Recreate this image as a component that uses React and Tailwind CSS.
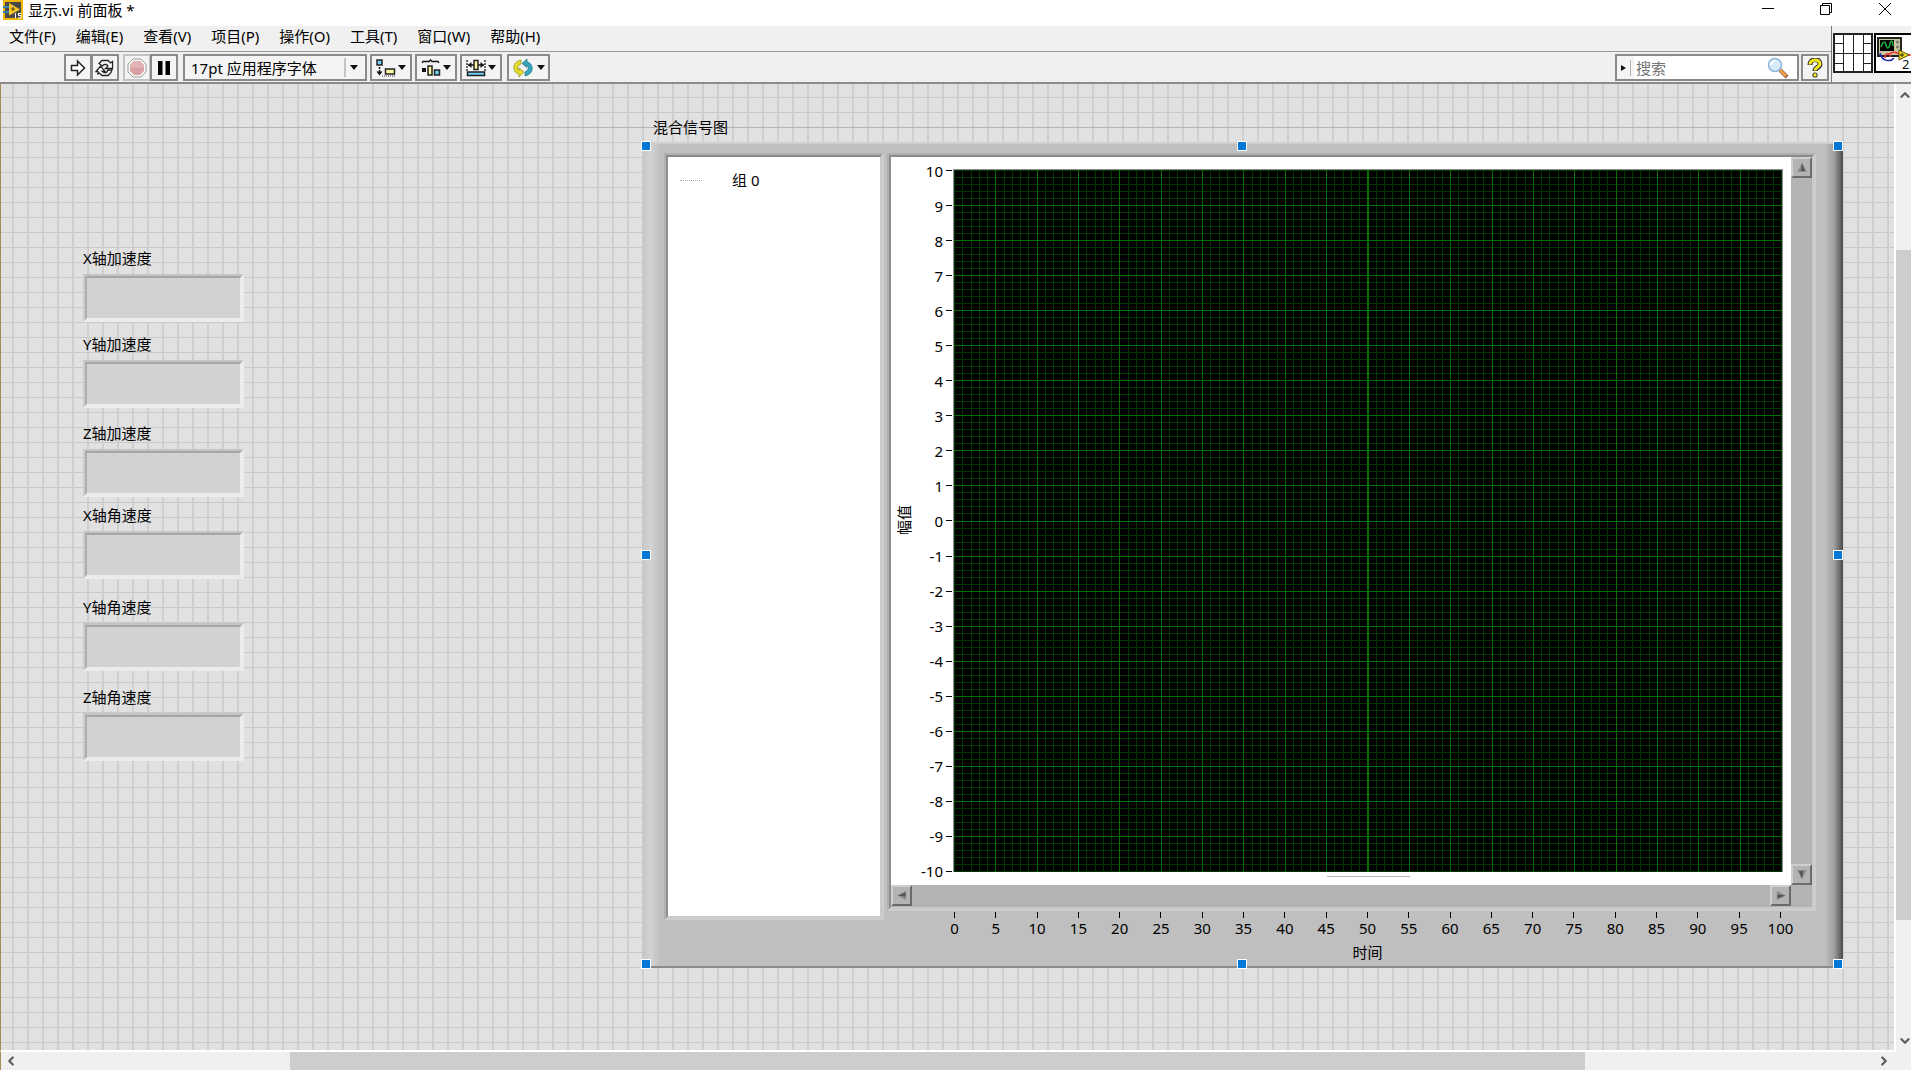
import { useState } from "react";
import { ChevronDown, ChevronLeft, ChevronRight, ChevronUp } from "lucide-react";

const MENUS = [
  "文件(F)",
  "编辑(E)",
  "查看(V)",
  "项目(P)",
  "操作(O)",
  "工具(T)",
  "窗口(W)",
  "帮助(H)",
];

const INDICATORS = [
  { id: "ax", label: "X轴加速度", top: "top-[162px]" },
  { id: "ay", label: "Y轴加速度", top: "top-[248px]" },
  { id: "az", label: "Z轴加速度", top: "top-[337px]" },
  { id: "gx", label: "X轴角速度", top: "top-[419px]" },
  { id: "gy", label: "Y轴角速度", top: "top-[511px]" },
  { id: "gz", label: "Z轴角速度", top: "top-[601px]" },
];

const HANDLES = [
  "left-0 top-0",
  "left-1/2 top-0 -translate-x-1/2",
  "right-0 top-0",
  "left-0 top-1/2 -translate-y-1/2",
  "right-0 top-1/2 -translate-y-1/2",
  "left-0 bottom-0",
  "left-1/2 bottom-0 -translate-x-1/2",
  "right-0 bottom-0",
];

const Y_TICKS = Array.from({ length: 21 }, (_, i) => 10 - i);
const X_TICKS = Array.from({ length: 21 }, (_, i) => i * 5);

// ---------------- TITLE BAR ----------------
const TitleBar = () => (
  <header className="flex h-[26px] shrink-0 items-center bg-white">
    <svg className="ml-[3px] size-5 self-start" viewBox="0 0 20 20" aria-hidden="true">
      <rect x="1" y="1" width="18" height="18" fill="#4a4a48" stroke="#f2b705" strokeWidth="2" />
      <path d="M0 7h7M0 12h7" stroke="#2f7fb5" strokeWidth="2" />
      <path d="M6 3l11 6.500-11 6z" fill="#f7c928" />
      <path d="M8 9h4M10 7v4" stroke="#4a3a00" strokeWidth="1" />
      <path d="M12.500 13v5M15 13.500h3.500M15.500 13.500v2h2.500v2.500h-3" stroke="#fff" fill="none" />
    </svg>
    <h1 className="ml-[5px] -mt-[6px] text-[15px] leading-5">显示.vi 前面板 *</h1>
    <div className="ml-auto flex h-full items-start">
      <button aria-label="最小化" className="flex h-[18px] w-[58px] items-center justify-center">
        <svg width="12" height="12" viewBox="0 0 12 12">
          <path d="M0 5.500h12" stroke="#000" />
        </svg>
      </button>
      <button aria-label="还原" className="flex h-[18px] w-[58px] items-center justify-center">
        <svg width="12" height="12" viewBox="0 0 12 12" fill="none" stroke="#000">
          <path d="M.5 2.500h9v9h-9zM2.500 2.500v-2h9v9h-2" />
        </svg>
      </button>
      <button aria-label="关闭" className="mr-[-3px] flex h-[18px] w-[59px] items-center justify-center">
        <svg width="12" height="12" viewBox="0 0 12 12" fill="none" stroke="#000">
          <path d="M0 0l12 12M12 0L0 12" />
        </svg>
      </button>
    </div>
  </header>
);

// ---------------- TOOLBAR ----------------
const ToolButton = ({ label, className = "", children }) => (
  <button
    aria-label={label}
    className={`flex h-[27px] items-center justify-center border-2 border-[#8a8a8a] bg-[#f4f4f4] ${className}`}
  >
    {children}
  </button>
);

const Caret = () => (
  <svg width="8" height="5" viewBox="0 0 8 5" aria-hidden="true">
    <path d="M0 0h8L4 5z" fill="#111" />
  </svg>
);

const RunIcon = () => (
  <svg width="16" height="18" viewBox="0 0 16 18">
    <path d="M1.500 6.500h6v-4.500l7 7-7 7v-4.500h-6z" fill="#fff" stroke="#222" strokeWidth="1.500" />
  </svg>
);

const RunLoopIcon = () => (
  <svg width="20" height="18" viewBox="0 0 20 18" fill="#fff" stroke="#222" strokeWidth="1.300">
    <path d="M4 4.500L7 1.500h6l2.500 2.500 2-1.500v7h-7l2.500-2.500-1.500-1.500H9L7.500 7z" />
    <path d="M16 13.500l-3 3H7L4.500 14l-1.500 1v-2.500H1L5.500 7l4.500 5.500H7.500l1.500 1h2.500l1.500-2.500h4z" />
  </svg>
);

const AbortIcon = () => (
  <svg width="20" height="20" viewBox="0 0 20 20">
    <path d="M6 1h8l5 5v8l-5 5H6l-5-5V6z" fill="#f8f8f8" stroke="#9a9a9a" />
    <path d="M7 3h6l4 4v6l-4 4H7l-4-4V7z" fill="#d9a0a4" />
    <path d="M7 3h6l4 4v3H3V7z" fill="#e2b2b5" />
  </svg>
);

const PauseIcon = () => (
  <svg width="12" height="14" viewBox="0 0 12 14">
    <path d="M0 0h4.500v14H0zM7.500 0H12v14H7.500z" fill="#000" />
  </svg>
);

const AlignIcon = () => (
  <svg width="20" height="18" viewBox="0 0 20 18">
    <rect x="1" y="1" width="5" height="5" fill="#6fd0f5" stroke="#222" strokeWidth="1.500" />
    <path d="M3.500 8v2M3.500 11v4" stroke="#111" strokeWidth="1.500" />
    <path d="M.5 12.500h6l-3 4z" fill="#111" />
    <rect x="9.500" y="10" width="9" height="5" fill="#fdf7a0" stroke="#222" strokeWidth="1.500" />
    <path d="M6 17h13" stroke="#222" strokeDasharray="1 1" />
  </svg>
);

const DistributeIcon = () => (
  <svg width="20" height="18" viewBox="0 0 20 18">
    <path d="M1 4l1-1.500h6L9.500 1 11 2.500h6L18 4" fill="none" stroke="#111" strokeWidth="1.300" />
    <rect x="1" y="9" width="4" height="4" fill="#111" />
    <rect x="7" y="7" width="4" height="9" fill="#fdf7a0" stroke="#222" strokeWidth="1.500" />
    <rect x="13.500" y="11" width="5" height="5" fill="#6fd0f5" stroke="#222" strokeWidth="1.500" />
  </svg>
);

const ResizeIcon = () => (
  <svg width="20" height="18" viewBox="0 0 20 18">
    <path d="M1 1v11M19 1v11" stroke="#222" strokeWidth="1.300" strokeDasharray="2 1" />
    <path d="M2 6h6M12 6h6" stroke="#111" strokeWidth="1.500" />
    <path d="M2 6l3.500-3v6zM18 6l-3.500-3v6z" fill="#111" />
    <rect x="8" y="1.500" width="4" height="9" fill="#fdf7a0" stroke="#222" strokeWidth="1.500" />
    <rect x="1.500" y="13" width="17" height="3.500" fill="#6fd0f5" stroke="#222" strokeWidth="1.500" />
  </svg>
);

const ReorderIcon = () => (
  <svg width="20" height="20" viewBox="0 0 20 20">
    <path d="M8 2C3 3 0 7 1 11c.6 3 2.500 4.500 5 5v3l5-5-5-4v2.500C4 11 4 7.500 8 6z" fill="#e6dc2c" stroke="#8c861a" strokeWidth=".7" />
    <path d="M12 18c5-1 8-5 7-9-.6-3-2.500-4.500-5-5V1L9 5.500l5 4V7c2 1.500 2 5-2 7z" fill="#35a7bd" stroke="#1b6b80" strokeWidth=".7" />
  </svg>
);

const Toolbar = () => {
  const [query, setQuery] = useState("");

  return (
    <div className="flex h-[31px] items-center pl-[64px]">
      <ToolButton label="运行" className="w-[28px]">
        <RunIcon />
      </ToolButton>
      <ToolButton label="连续运行" className="-ml-px w-[28px]">
        <RunLoopIcon />
      </ToolButton>
      <ToolButton label="中止执行" className="ml-1 w-[28px] border-[#c4c4c4]">
        <AbortIcon />
      </ToolButton>
      <ToolButton label="暂停" className="-ml-px w-[28px]">
        <PauseIcon />
      </ToolButton>

      <div className="relative ml-[5px]">
        <select
          aria-label="文本设置"
          className="h-[27px] w-[184px] appearance-none border-2 border-[#8a8a8a] bg-[#f4f4f4] pl-[6px] text-[15px] leading-5"
        >
          <option>17pt 应用程序字体</option>
        </select>
        <span className="pointer-events-none absolute right-[9px] top-1 flex h-[19px] items-center border-l-2 border-[#c4c4c4] pl-1">
          <Caret />
        </span>
      </div>

      <ToolButton label="对齐对象" className="ml-[3px] w-[42px] gap-[2px]">
        <AlignIcon />
        <Caret />
      </ToolButton>
      <ToolButton label="分布对象" className="ml-[3px] w-[42px] gap-[2px]">
        <DistributeIcon />
        <Caret />
      </ToolButton>
      <ToolButton label="调整对象大小" className="ml-[3px] w-[42px] gap-[2px]">
        <ResizeIcon />
        <Caret />
      </ToolButton>
      <ToolButton label="重新排序" className="ml-[5px] w-[43px] gap-1">
        <ReorderIcon />
        <Caret />
      </ToolButton>

      <div className="ml-auto flex h-[27px] w-[184px] items-center border-2 border-[#8a8a8a] bg-white">
        <span className="flex h-full w-[17px] items-center gap-1 bg-[#f4f4f4] pl-1">
          <svg width="5" height="6" viewBox="0 0 5 6" aria-hidden="true">
            <path d="M0 0l5 3-5 3z" fill="#111" />
          </svg>
          <span className="h-4 w-px bg-[#b4b4b4]" />
        </span>
        <input
          type="text"
          aria-label="搜索"
          placeholder="搜索"
          value={query}
          onChange={(e) => setQuery(e.target.value)}
          className="ml-[2px] w-0 flex-1 bg-transparent text-[15px] leading-5 outline-none placeholder:text-[#757575]"
        />
        <svg className="mr-2" width="22" height="22" viewBox="0 0 22 22" aria-hidden="true">
          <path d="M13 13l7 7" stroke="#8a5a40" strokeWidth="4" />
          <path d="M12 12l7 7" stroke="#f0a040" strokeWidth="3" />
          <circle cx="8" cy="8" r="6.500" fill="#d4ecfb" stroke="#8fb4d8" strokeWidth="1.500" />
          <path d="M4 8a4 4 0 0 1 4-4" stroke="#fff" strokeWidth="2" fill="none" />
        </svg>
      </div>
      <ToolButton label="显示即时帮助" className="ml-[2px] mr-[2px] w-[28px]">
        <svg width="16" height="20" viewBox="0 0 16 20" fill="none">
          <path d="M3 7c0-7 10-7 10-1 0 4-5 3-5 7" stroke="#333" strokeWidth="5" />
          <circle cx="8" cy="17" r="2.600" fill="#333" />
          <path d="M3 6.500c0-6 10-6 10-.500 0 3.500-5 3-5 6.500" stroke="#f5e920" strokeWidth="3" />
          <circle cx="8" cy="17" r="1.700" fill="#f5e920" />
        </svg>
      </ToolButton>
    </div>
  );
};

const ConnectorPane = () => (
  <svg className="shrink-0" width="40" height="40" viewBox="0 0 40 40" aria-hidden="true">
    <rect x="1" y="1" width="38" height="38" fill="#fff" stroke="#222" strokeWidth="2" />
    <path d="M10.500 0v40M20.500 0v40M30.500 0v40M0 20.500h40M0 10.500h10M0 30.500h10M30 10.500h10M30 30.500h10" stroke="#222" />
  </svg>
);

const ViIcon = () => (
  <svg className="shrink-0" width="40" height="40" viewBox="0 0 40 40" aria-hidden="true">
    <rect x="1" y="1" width="38" height="38" fill="#fff" stroke="#000" strokeWidth="2" />
    <rect x="4" y="5" width="23" height="18" fill="#c9c7a0" stroke="#222" strokeWidth="2" />
    <rect x="6" y="7" width="14" height="11" fill="#000" />
    <path d="M7 14c2-6 4-6 5-2s3 4 4-1 3-3 3 2" stroke="#1fae3c" strokeWidth="1.500" fill="none" />
    <circle cx="23.500" cy="9" r="1.500" fill="#777" />
    <circle cx="23.500" cy="14" r="1.500" fill="#777" />
    <path d="M6 20c2 9 11 9 14 5" stroke="#2626a8" strokeWidth="1.500" fill="none" />
    <path d="M11 25c0-6 6-5 5-1M15 21c5-4 8-1 10 0M34 22h6" stroke="#e33" strokeWidth="1.500" fill="none" />
    <path d="M25 17l10 5-10 5z" fill="#f3e021" stroke="#554e00" />
    <path d="M26 22h4M28 20v4" stroke="#222" />
    <text x="28" y="36" fontSize="13" fontFamily="Noto Sans" fill="#111">2</text>
  </svg>
);

// ---------------- FRONT PANEL CONTROLS ----------------
const Bevel = ({ className = "", children }) => (
  <div
    className={`flex border-2 border-t-[#b0b0b0] border-r-[#cdcdcd] border-b-[#cdcdcd] border-l-[#b0b0b0] ${className}`}
  >
    <div className="flex min-w-0 flex-1 border-2 border-t-[#8a8a8a] border-r-[#cacaca] border-b-[#cacaca] border-l-[#8e8e8e]">
      {children}
    </div>
  </div>
);

const Indicator = ({ id, label, top }) => (
  <div className={`absolute left-[82px] ${top}`}>
    <label htmlFor={id} className="block h-6 text-[15px] leading-6">
      {label}
    </label>
    <div className="mt-1 border-2 border-t-[#c4c4c4] border-r-[#ececec] border-b-[#ececec] border-l-[#cccccc]">
      <input
        id={id}
        readOnly
        className="block h-[44px] w-[157px] border-2 border-t-[#a6a6a6] border-r-[#ececec] border-b-[#ececec] border-l-[#acacac] bg-[#d2d2d2] outline-none"
      />
    </div>
  </div>
);

const ScrollButton = ({ label, rotate }) => (
  <button
    aria-label={label}
    className="flex size-[21px] shrink-0 items-center justify-center border-2 border-t-[#cfcfcf] border-r-[#6b6b6b] border-b-[#6b6b6b] border-l-[#cfcfcf] bg-[#b3b3b3]"
  >
    <svg className={rotate} width="10" height="9" viewBox="0 0 10 9">
      <path d="M5 0l5 9H0z" fill="#8c8c8c" />
      <path d="M5 0l3 8H4z" fill="#555" />
    </svg>
  </button>
);

const Plot = () => (
  <svg
    className="block h-full w-full bg-black"
    viewBox="0 0 829 702"
    preserveAspectRatio="none"
    shapeRendering="crispEdges"
    role="img"
    aria-label="混合信号图"
  >
    <g stroke="#003600">
      {Array.from({ length: 101 }, (_, i) => (
        <line key={i} x1={1.5 + i * 8.26} x2={1.5 + i * 8.26} y1="0" y2="702" />
      ))}
      {Array.from({ length: 101 }, (_, i) => (
        <line key={i} y1={1.5 + i * 7} y2={1.5 + i * 7} x1="0" x2="829" />
      ))}
    </g>
    <g stroke="#007000">
      {Array.from({ length: 19 }, (_, i) => (
        <line key={i} x1={42.8 + i * 41.3} x2={42.8 + i * 41.3} y1="0" y2="702" />
      ))}
      {Array.from({ length: 19 }, (_, i) => (
        <line key={i} y1={36.5 + i * 35} y2={36.5 + i * 35} x1="0" x2="829" />
      ))}
    </g>
    <path d="M.5 702V.5H828.500V702" fill="none" stroke="#8c8c8c" />
  </svg>
);

const MixedSignalGraph = () => (
  <section className="relative flex min-h-0 flex-1 border-t-2 border-b-2 border-t-[#cfcfcf] border-b-[#8a8a8a] bg-[#bfbfbf]">
    <div className="w-[18px] shrink-0 bg-linear-to-r from-[#c6c6c6] via-[#d3d3d3] to-[#bfbfbf]" />

    <div className="flex min-w-0 flex-1 pt-[9px] pl-1">
      {/* GROUP TREE */}
      <Bevel className="mb-[46px] w-[220px] shrink-0">
        <div className="flex flex-1 items-start bg-white pt-[11px] pl-3 text-[15px] leading-6">
          <span className="mt-3 w-[22px] border-t border-dotted border-[#a8a8a8]" />
          <span className="ml-[30px]">组 0</span>
        </div>
      </Bevel>

      <div className="ml-[3px] flex min-w-0 flex-1 flex-col">
        <Bevel className="min-h-0 flex-1">
          <div className="flex min-w-0 flex-1 flex-col bg-[#b3b3b3]">
            <div className="flex min-h-0 flex-1">
              <div className="flex min-w-0 flex-1 bg-white pt-3 pr-2 pb-[13px]">
                <div className="flex w-[26px] items-center justify-center">
                  <span className="rotate-180 text-[15px] leading-5 [text-orientation:sideways] [writing-mode:vertical-rl]">
                    幅值
                  </span>
                </div>
                <div className="flex w-[36px] flex-col justify-between pt-px text-[15px]">
                  {Y_TICKS.map((v) => (
                    <div key={v} className="flex h-px items-center justify-end gap-[3px]">
                      <span className="leading-5">{v}</span>
                      <span className="mr-px h-px w-[6px] bg-black" />
                    </div>
                  ))}
                </div>
                <div className="relative min-w-0 flex-1">
                  <Plot />
                  <span className="absolute top-full left-[45%] mt-1 h-px w-[83px] bg-[#b0b0b0]" />
                </div>
              </div>
              <div className="flex w-[21px] flex-col justify-between">
                <ScrollButton label="向上滚动" rotate="rotate-0" />
                <ScrollButton label="向下滚动" rotate="rotate-180" />
              </div>
            </div>
            <div className="mr-[21px] flex h-[22px] justify-between">
              <ScrollButton label="向左滚动" rotate="-rotate-90" />
              <ScrollButton label="向右滚动" rotate="rotate-90" />
            </div>
          </div>
        </Bevel>

        {/* TIME AXIS */}
        <div className="h-[55px] shrink-0 pr-[35px] pl-[67px] text-[15px] leading-5">
          <div className="flex justify-between">
            {X_TICKS.map((v) => (
              <div key={v} className="flex w-px flex-col items-center">
                <span className="mt-px h-[6px] w-px bg-black" />
                <span>{v}</span>
              </div>
            ))}
          </div>
          <div className="mt-1 text-center">时间</div>
        </div>
      </div>
    </div>

    <div className="ml-[9px] w-[18px] shrink-0 bg-linear-to-r from-[#bfbfbf] via-[#a0a0a0] to-[#4c4c4c]" />

    {/* resize handles */}
    <div className="pointer-events-none absolute -inset-y-[3px] -left-px right-0">
      {HANDLES.map((pos) => (
        <span key={pos} className={`absolute size-[10px] border border-white bg-[#0078d7] ${pos}`} />
      ))}
    </div>
  </section>
);

// ---------------- MAIN WINDOW ----------------
export default function App() {
  return (
    <div className="flex h-screen flex-col overflow-hidden bg-[#f0f0f0] font-['Noto_Sans','Noto_Sans_CJK_SC',sans-serif] text-black">
      <TitleBar />

      <div className="flex h-[58px] shrink-0 border-b-2 border-[#8a8a8a]">
        <div className="min-w-0 flex-1">
          <nav className="flex h-[26px] items-center gap-5 border-b border-[#9a9a9a] pb-[5px] pl-[9px] text-[15px] leading-5">
            {MENUS.map((m) => (
              <button key={m}>{m}</button>
            ))}
          </nav>
          <Toolbar />
        </div>
        <div className="flex w-[80px] items-start gap-px overflow-hidden border-l border-[#777] pt-[7px] pl-px">
          <ConnectorPane />
          <ViIcon />
        </div>
      </div>

      <div className="flex min-h-0 flex-1">
        <main className="relative flex min-w-0 flex-1 border-r-2 border-b-2 border-l border-r-white border-b-white border-l-[#a58b55] bg-[#e1e1e1] bg-[linear-gradient(to_right,#cfcfcf_2px,transparent_2px),linear-gradient(to_bottom,#c9c9c9_1px,transparent_1px)] bg-size-[15px_15px] bg-position-[11px_13px]">
          <div className="absolute inset-x-0 top-[43px] h-px bg-[#b4b4b4]" />
          {INDICATORS.map((item) => (
            <Indicator key={item.id} {...item} />
          ))}

          <div className="relative mt-[31px] mr-[51px] mb-[82px] ml-[641px] flex min-w-0 flex-1 flex-col">
            <h2 className="h-[27px] pl-[11px] text-[15px] leading-6">混合信号图</h2>
            <MixedSignalGraph />
          </div>
        </main>

        {/* VERTICAL SCROLLBAR */}
        <div className="flex w-[15px] shrink-0 flex-col overflow-hidden">
          <button aria-label="上移" className="flex h-[22px] w-[18px] items-center justify-center text-[#606060]">
            <ChevronUp size={14} strokeWidth={4} />
          </button>
          <div className="min-h-0 flex-1 pt-[144px] pb-[110px]">
            <div className="h-full bg-[#cdcdcd]" />
          </div>
          <button aria-label="下移" className="flex h-[22px] w-[18px] items-center justify-center text-[#606060]">
            <ChevronDown size={14} strokeWidth={4} />
          </button>
        </div>
      </div>

      {/* HORIZONTAL SCROLLBAR */}
      <div className="flex h-[18px] shrink-0 border-l border-[#a58b55] pr-[17px]">
        <button aria-label="左移" className="flex w-[20px] items-center justify-center text-[#606060]">
          <ChevronLeft size={14} strokeWidth={4} />
        </button>
        <div className="min-w-0 flex-1 pr-[289px] pl-[269px]">
          <div className="h-full bg-[#cdcdcd]" />
        </div>
        <button aria-label="右移" className="flex w-[20px] items-center justify-center text-[#606060]">
          <ChevronRight size={14} strokeWidth={4} />
        </button>
      </div>
    </div>
  );
}
